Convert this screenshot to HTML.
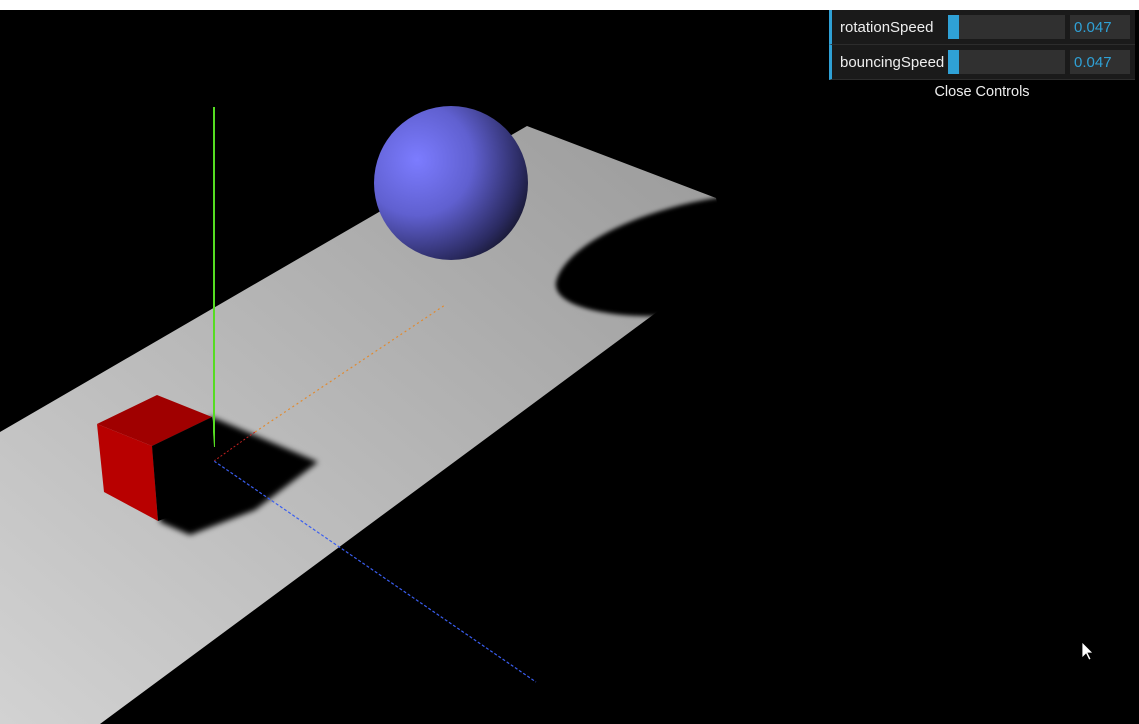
<!DOCTYPE html>
<html><head><style>
html,body{margin:0;padding:0;width:1139px;height:724px;overflow:hidden;background:#000;font-family:"Liberation Sans",sans-serif}
#top{position:absolute;left:0;top:0;width:1139px;height:10px;background:#fff}
.gui{position:absolute;left:829px;top:10px;width:306px}
.row{position:relative;height:34px;background:#1a1a1a;border-left:3px solid #2fa1d6;border-bottom:1px solid #2c2c2c}
.lab{position:absolute;left:8px;top:9px;color:#eee;font-size:15px;width:108px;overflow:hidden;white-space:nowrap}
.sl{position:absolute;left:116px;top:5px;width:117px;height:24px;background:#303030}
.sl i{position:absolute;left:0;top:0;width:11px;height:24px;background:#2fa1d6}
.num{position:absolute;left:238px;top:5px;width:60px;height:24px;background:#303030;color:#2fa1d6;font-size:15px;line-height:26px;padding-left:4px;box-sizing:border-box}
.close{position:absolute;left:829px;top:81px;width:306px;height:22px;text-align:center;color:#eee;font-size:14.5px;line-height:22px}
</style></head><body>
<div id="top"></div>
<svg width="1139" height="724" style="position:absolute;left:0;top:0">
<defs>
<linearGradient id="pg" x1="0" y1="1" x2="1" y2="0" gradientUnits="objectBoundingBox">
<stop offset="0" stop-color="#d2d2d2"/><stop offset="1" stop-color="#9a9a9a"/></linearGradient>
<radialGradient id="sg" cx="0.28" cy="0.35" r="0.8">
<stop offset="0" stop-color="#7c7cff"/><stop offset="0.45" stop-color="#6060d0"/><stop offset="0.85" stop-color="#2a2a60"/><stop offset="1" stop-color="#15152a"/></radialGradient>
<filter id="b" x="-20%" y="-20%" width="140%" height="140%"><feGaussianBlur stdDeviation="3"/></filter>
<filter id="b2" x="-20%" y="-20%" width="140%" height="140%"><feGaussianBlur stdDeviation="2"/></filter>
</defs>
<polygon points="0,432 527,126 716,198 730,258 100,724 0,724" fill="url(#pg)"/>
<path d="M716,198 C640,210 565,245 556,282 C552,308 615,318 665,316 L760,250 L760,195 Z" fill="#000" filter="url(#b2)"/>
<polygon points="152,446 212,417 245,431 318,462 255,510 190,535 160,522" fill="#000" filter="url(#b)"/>
<line x1="214" y1="107" x2="214" y2="447" stroke="#55dd22" stroke-width="2"/>
<line x1="214" y1="461" x2="255" y2="432" stroke="#c02020" stroke-width="1" stroke-dasharray="2 2"/>
<line x1="255" y1="432" x2="445" y2="305" stroke="#e08a30" stroke-width="1.2" stroke-dasharray="2 3"/>
<line x1="214" y1="461" x2="536" y2="682" stroke="#3a5ef0" stroke-width="1.2" stroke-dasharray="3 2"/>
<polygon points="97,424 157,395 212,417 152,446" fill="#a00000"/>
<polygon points="97,424 152,446 158,521 104,492" fill="#b80000"/>
<polygon points="152,446 212,417 214,447 215,500 158,521" fill="#000"/>
<circle cx="451" cy="183" r="77" fill="url(#sg)"/>
<path d="M1082,642 L1082,658 L1086,654 L1089,660 L1091,659 L1088,653 L1093,653 Z" fill="#fff" stroke="#000" stroke-width="0.8"/>
</svg>
<div class="gui">
<div class="row"><div class="lab">rotationSpeed</div><div class="sl"><i></i></div><div class="num">0.047</div></div>
<div class="row"><div class="lab">bouncingSpeed</div><div class="sl"><i></i></div><div class="num">0.047</div></div>
</div>
<div class="close">Close Controls</div>
</body></html>
